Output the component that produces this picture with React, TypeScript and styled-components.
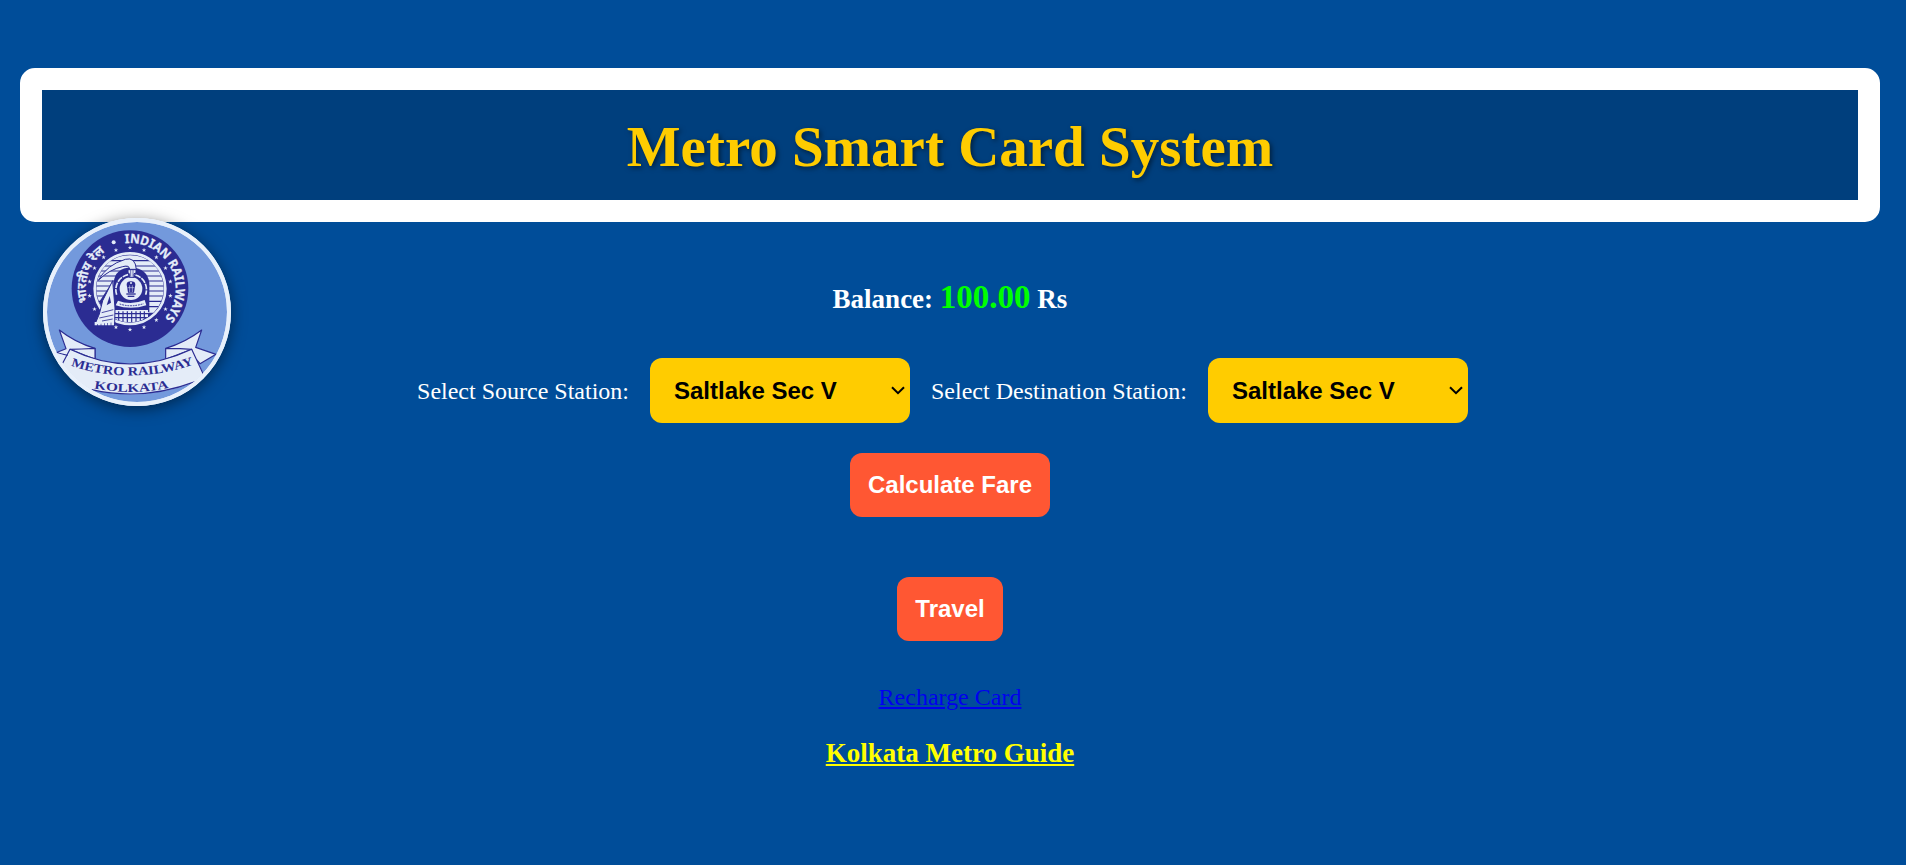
import React from "react";
import styled, { createGlobalStyle } from "styled-components";

const Global = createGlobalStyle`
  * { box-sizing: border-box; }
  body { margin: 0; background: #004d99; color: #fff; font-family: "Liberation Serif", serif; }
`;

const Page = styled.main`
  position: relative;
  min-height: 865px;
  padding: 68px 26px 0 20px;
  display: flex;
  flex-direction: column;
  align-items: center;
  font-size: 24px;
`;

const Header = styled.header`
  align-self: stretch;
  height: 154px;
  padding-top: 3px;
  border: 22px solid #fff;
  border-radius: 15px;
  background: #003f7d;
  display: flex;
  align-items: center;
  justify-content: center;
`;

const Title = styled.h1`
  margin: 0;
  font-size: 57px;
  line-height: 64px;
  color: #ffcc00;
  text-shadow: 2px 2px 5px rgba(0, 0, 0, 0.5);
`;

const LogoBadge = styled.div`
  position: absolute;
  left: 43px;
  top: 218px;
  width: 188px;
  height: 188px;
  border-radius: 50%;
  box-shadow: 0 3px 15px rgba(0, 0, 0, 0.5);

  svg { display: block; }
`;

const Balance = styled.div`
  height: 41px;
  margin-top: 55px;
  font-size: 27px;
  font-weight: bold;
  line-height: 40px;
`;

const Amount = styled.span`
  color: #00ff00;
  font-size: 33px;
`;

const StationRow = styled.div`
  display: flex;
  align-items: center;
  gap: 21px;
  margin-top: 40px;
  padding-right: 15px;
`;

const StationLabel = styled.label`
  padding-top: 1px;
`;

const SelectBox = styled.div`
  position: relative;
  width: 260px;
  height: 65px;

  svg {
    position: absolute;
    right: 5px;
    top: 28px;
    pointer-events: none;
  }
`;

const Select = styled.select`
  appearance: none;
  width: 100%;
  height: 100%;
  border: 0;
  border-radius: 12px;
  background: #ffcc00;
  color: #000;
  padding: 0 24px;
  font: bold 24px "Liberation Sans", sans-serif;
`;

const Button = styled.button<{ $width: number; $gap: number }>`
  width: ${(p) => p.$width}px;
  height: 64px;
  margin-top: ${(p) => p.$gap}px;
  padding: 0;
  border: 0;
  border-radius: 12px;
  background: #ff5733;
  color: #fff;
  font: bold 24px "Liberation Sans", sans-serif;
`;

const RechargeLink = styled.a`
  margin-top: 42px;
  color: #0000ee;
  line-height: 28px;
`;

const GuideLink = styled.a`
  margin-top: 28px;
  color: #ffff00;
  font-size: 27px;
  font-weight: bold;
  line-height: 28px;
`;

const NAVY = "#2b2c92";
const PALE = "#e4ecf8";
const SKY = "#7399dc";

const starPoints = Array.from({ length: 10 }, (_, i) => {
  const r = i % 2 ? 2.8 : 7;
  const a = (i * Math.PI) / 5;
  return `${(r * Math.sin(a)).toFixed(2)},${(-r * Math.cos(a)).toFixed(2)}`;
}).join(" ");

function RailwayLogo() {
  return (
    <svg width="188" height="188" viewBox="39 38 564 564">
      <defs>
        <clipPath id="disc"><circle cx="321" cy="320" r="271" /></clipPath>
        <clipPath id="scene"><circle cx="300" cy="250" r="101" /></clipPath>
        <path id="arcEn" d="M285 114 A137 137 0 1 1 185 325" />
        <path id="arcHi" d="M174 291 A133 133 0 0 1 260 123" />
        <path id="ribbonTop" d="M122 481 Q300 541 486 479" />
        <path id="ribbonLow" d="M192 549 Q305 571 420 547" />
      </defs>
      <circle cx="321" cy="320" r="282" fill="#e8f0fb" />
      <circle cx="321" cy="320" r="270" fill={SKY} />

      <circle cx="300" cy="250" r="175" fill={NAVY} />
      <circle cx="300" cy="250" r="106" fill={NAVY} stroke={PALE} strokeWidth="8" />
      {Array.from({ length: 18 }, (_, i) => i * 20).filter((a) => a !== 220).map((a) => {
        const t = (a * Math.PI) / 180;
        return (
          <polygon
            key={a}
            points={starPoints}
            fill={PALE}
            transform={`translate(${300 + 123 * Math.sin(t)} ${250 - 123 * Math.cos(t)})`}
          />
        );
      })}

      <g clipPath="url(#scene)">
        <path d="M198 150H402V322H198Z" fill={PALE} />
        <path d="M198 166H402M198 182H402M198 197H402M198 212H402M198 227H402M198 242H402M198 257H402M198 272H402M198 288H402M198 304H402" stroke={NAVY} strokeWidth="3.5" />
        <path d="M198 304L250 225V310L300 362L358 322V300H358V360H198Z" fill={NAVY} />
        <path d="M251 320V232Q255 188 304 186Q352 190 358 232V320Z" fill={NAVY} />
        <path d="M260 268A46 46 0 1 1 347 268" fill="none" stroke={PALE} strokeWidth="5" strokeDasharray="17 3" />
        <path d="M252 314H354V335L302 362L252 343Z" fill={PALE} />
        <path d="M250 325H354M252 337H352M266 318V352M279 318V357M292 318V360M305 318V361M318 318V355M331 318V349M343 318V343" stroke={NAVY} strokeWidth="3.5" />
        <path d="M264 286Q303 301 344 284L349 300Q302 315 257 300Z" fill={PALE} />
        <path d="M269 296Q303 307 341 295" fill="none" stroke={NAVY} strokeWidth="3" strokeDasharray="5 3" />
      </g>

      <circle cx="303" cy="250" r="34" fill={PALE} />
      <g fill={NAVY}>
        <ellipse cx="303" cy="238" rx="13" ry="10" />
        <path d="M291 242H315L312 262H294Z" />
        <rect x="289" y="264" width="28" height="4" />
        <rect x="293" y="271" width="20" height="4" />
      </g>
      <path d="M299 240V260M307 240V260M293 247H313" stroke={PALE} strokeWidth="1.7" />
      <circle cx="303" cy="233" r="3" fill={PALE} />

      <path d="M205 225Q231 178 286 162Q316 154 319 192H299Q298 178 278 184Q238 192 205 225Z" fill={PALE} stroke={NAVY} strokeWidth="3" />
      <path d="M294 193H318V203L312 205V216H298V205L294 203Z" fill={PALE} stroke={NAVY} strokeWidth="3" />
      <path d="M302 194V214M309 194V214" stroke={NAVY} strokeWidth="2" />
      <path d="M248 226L255 308L254 352L194 359L208 326L218 286Z" fill={PALE} stroke={NAVY} strokeWidth="3" />
      <path d="M239 272L243 292L230 300Z" fill={NAVY} />
      <path d="M215 322L250 313M208 338L250 329M216 347L248 341" stroke={NAVY} strokeWidth="2.5" />
      <path d="M194 355H254" stroke={PALE} strokeWidth="10" strokeDasharray="8 2" />

      <circle cx="251" cy="111" r="6" fill={PALE} />
      <text fill={PALE} stroke={PALE} strokeWidth="0.8" fontFamily='"Noto Sans", sans-serif' fontSize="38" fontWeight="700">
        <textPath href="#arcEn" textLength="326" lengthAdjust="spacingAndGlyphs">INDIAN RAILWAYS</textPath>
      </text>
      <text fill={PALE} stroke={PALE} strokeWidth="0.6" fontFamily='"Noto Sans", sans-serif' fontSize="38" fontWeight="700">
        <textPath href="#arcHi">भारतीय रेल</textPath>
      </text>

      <g clipPath="url(#disc)" stroke={NAVY} strokeWidth="3.5" strokeLinejoin="round">
        <path d="M88 374Q136 412 195 429V474L112 450L78 442L108 430Z" fill={PALE} />
        <path d="M515 374Q465 412 407 429V474L500 464L510 475L558 447L497 426Z" fill={PALE} />
        <path d="M195 462L120 432L155 431L195 429Z" fill={PALE} />
        <path d="M407 462L485 432L450 430L407 430Z" fill={PALE} />
        <path d="M40 442H78L112 452L120 432Q300 520 485 432L522 508L490 533Q340 588 185 553L200 620H40Z" fill={PALE} stroke="none" />
        <path d="M98 474L120 432Q300 520 485 432L520 507" fill="none" />
        <path d="M185 553Q340 588 496 529" fill="none" />
      </g>
      <circle cx="321" cy="320" r="276" fill="none" stroke="#e8f0fb" strokeWidth="12" />
      <g fill={NAVY} fontFamily='"Liberation Serif", serif' fontWeight="700">
        <text fontSize="37"><textPath href="#ribbonTop" textLength="376" lengthAdjust="spacingAndGlyphs">METRO RAILWAY</textPath></text>
        <text fontSize="35"><textPath href="#ribbonLow" textLength="226" lengthAdjust="spacingAndGlyphs">KOLKATA</textPath></text>
      </g>
    </svg>
  );
}

function StationSelect() {
  return (
    <SelectBox>
      <Select><option>Saltlake Sec V</option></Select>
      <svg width="14" height="9" viewBox="0 0 14 9" fill="none" stroke="#000" strokeWidth="2">
        <path d="M1 1.2L7 7.2L13 1.2" />
      </svg>
    </SelectBox>
  );
}

export default function App() {
  return (
    <>
      <Global />
      <Page>
        <Header><Title>Metro Smart Card System</Title></Header>
        <LogoBadge><RailwayLogo /></LogoBadge>
        <Balance>Balance: <Amount>100.00</Amount> Rs</Balance>
        <StationRow>
          <StationLabel>Select Source Station:</StationLabel>
          <StationSelect />
          <StationLabel>Select Destination Station:</StationLabel>
          <StationSelect />
        </StationRow>
        <Button $width={200} $gap={30}>Calculate Fare</Button>
        <Button $width={106} $gap={60}>Travel</Button>
        <RechargeLink href="#">Recharge Card</RechargeLink>
        <GuideLink href="#">Kolkata Metro Guide</GuideLink>
      </Page>
    </>
  );
}
